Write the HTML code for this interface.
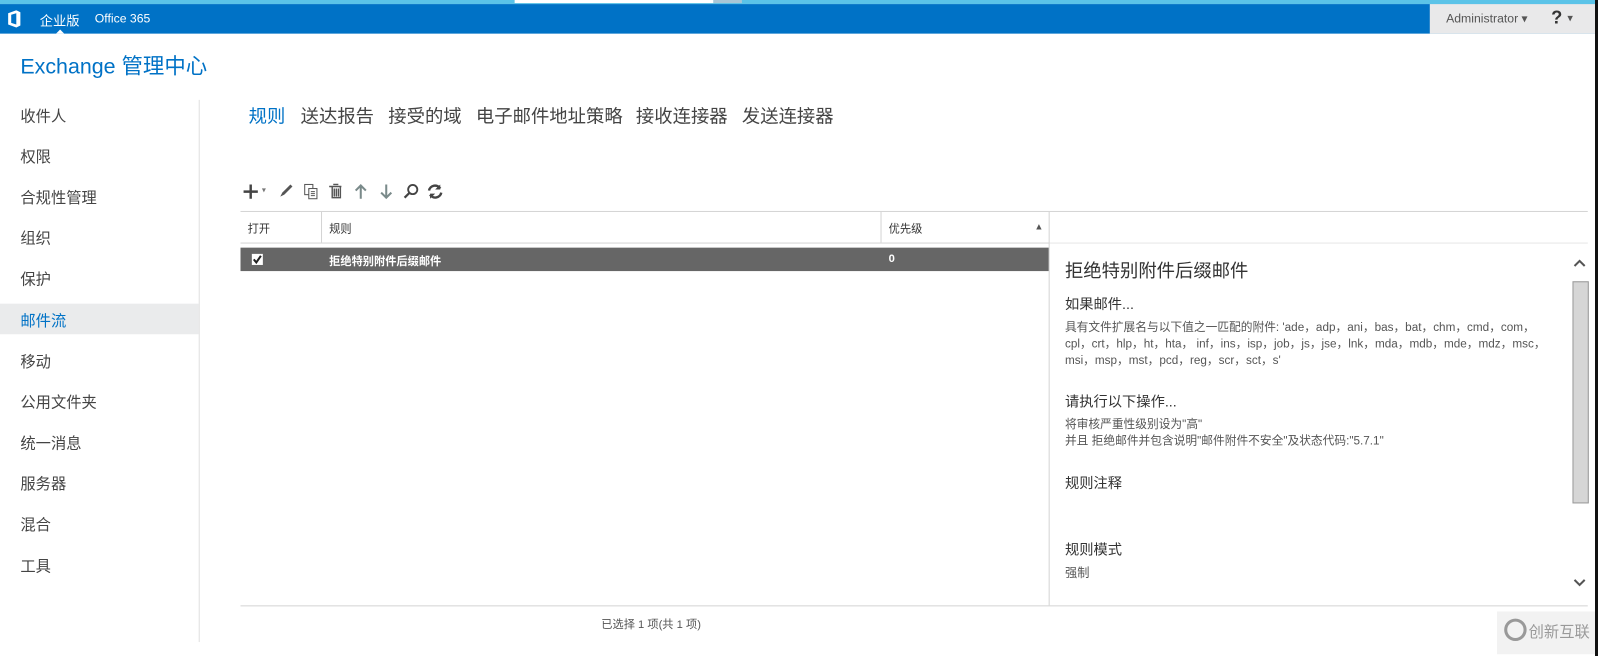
<!DOCTYPE html>
<html><head><meta charset="utf-8"><style>
*{margin:0;padding:0;box-sizing:border-box}
body{width:1598px;height:656px;background:#fff;font-family:"Liberation Sans","Noto Sans CJK SC",sans-serif;position:relative;overflow:hidden;color:#333}
#w{position:absolute;left:0;top:0;width:1568px;height:644px;transform:scale(1.0191);transform-origin:0 0}
.a{position:absolute;white-space:nowrap}
.nav{left:20px;font-size:15px;color:#444}
.tab{top:100px;font-size:18px;color:#444}
.hl{position:absolute;background:#d4d4d4}
.s{font-size:12px;color:#555;line-height:16px}
</style></head><body>
<div id="w">
<div class="a" style="left:0;top:0;width:1568px;height:4px;background:#5bc3e8"></div>
<div class="a" style="left:505px;top:0;width:195px;height:3px;background:#fff"></div>
<div class="a" style="left:700px;top:0;width:28px;height:3px;background:#a9c6d6"></div>
<div class="a" style="left:0;top:4px;width:1568px;height:29px;background:#0072c6"></div>
<div class="a" style="left:1403px;top:4px;width:165px;height:29px;background:#e9e9ea"></div>
<svg class="a" style="left:7px;top:10px" width="14" height="17" viewBox="0 0 14 17"><path d="M1 3 L9 0 L13 2 L13 15 L9 17 L1 14 Z M4 4.5 L4 12.5 L9 14 L9 3 Z" fill="#fff" fill-rule="evenodd"/></svg>
<div class="a" style="left:39px;top:10px;font-size:13px;color:#fff">企业版</div>
<div class="a" style="left:55px;top:29px;width:0;height:0;border-left:4px solid transparent;border-right:4px solid transparent;border-bottom:4px solid #fff"></div>
<div class="a" style="left:93px;top:11px;font-size:12px;color:#fff">Office 365</div>
<div class="a" style="left:1419px;top:11px;font-size:12px;color:#555">Administrator ▾</div>
<div class="a" style="left:1522px;top:7px;font-size:18px;font-weight:bold;color:#333">?</div>
<div class="a" style="left:1538px;top:11px;font-size:11px;color:#555">▾</div>
<div class="a" style="left:20px;top:49px;font-size:21px;color:#0072c6">Exchange 管理中心</div>
<div class="a" style="left:0;top:298px;width:195px;height:30px;background:#eaebec"></div>
<div class="a nav" style="top:103px">收件人</div>
<div class="a nav" style="top:143px">权限</div>
<div class="a nav" style="top:183px">合规性管理</div>
<div class="a nav" style="top:223px">组织</div>
<div class="a nav" style="top:263px">保护</div>
<div class="a nav" style="top:304px;color:#0072c6">邮件流</div>
<div class="a nav" style="top:344px">移动</div>
<div class="a nav" style="top:384px">公用文件夹</div>
<div class="a nav" style="top:424px">统一消息</div>
<div class="a nav" style="top:464px">服务器</div>
<div class="a nav" style="top:504px">混合</div>
<div class="a nav" style="top:545px">工具</div>
<div class="a" style="left:195px;top:98px;width:1px;height:532px;background:#e0e0e0"></div>
<div class="a tab" style="left:244px;color:#0072c6">规则</div>
<div class="a tab" style="left:295px">送达报告</div>
<div class="a tab" style="left:381px">接受的域</div>
<div class="a tab" style="left:467px">电子邮件地址策略</div>
<div class="a tab" style="left:624px">接收连接器</div>
<div class="a tab" style="left:728px">发送连接器</div>
<svg class="a" style="left:237px;top:179px" width="18" height="18"><path d="M9 2v14M2 9h14" stroke="#444" stroke-width="2.4"/></svg>
<div class="a" style="left:257px;top:182px;font-size:8px;color:#777">▾</div>
<svg class="a" style="left:272px;top:178px" width="18" height="18"><path d="M3 15 L5 11 L13 3 L15 5 L7 13 Z" fill="#555"/></svg>
<svg class="a" style="left:297px;top:179px" width="18" height="18"><rect x="2" y="2" width="8" height="10" fill="none" stroke="#555"/><rect x="6" y="6" width="8" height="10" fill="#fff" stroke="#555"/><path d="M8 9h4M8 11h4M8 13h4" stroke="#555"/></svg>
<svg class="a" style="left:321px;top:179px" width="18" height="18"><path d="M2 4h12M5 4v11h8V4M7 6v8M9 6v8M11 6v8M6 2h5" stroke="#555" fill="none" stroke-width="1.4"/></svg>
<svg class="a" style="left:346px;top:179px" width="16" height="18"><path d="M8 16V3M3 8l5-5 5 5" stroke="#7a8a8a" fill="none" stroke-width="2"/></svg>
<svg class="a" style="left:371px;top:179px" width="16" height="18"><path d="M8 2v13M3 10l5 5 5-5" stroke="#7a8a8a" fill="none" stroke-width="2"/></svg>
<svg class="a" style="left:395px;top:179px" width="18" height="18"><circle cx="10" cy="7" r="4.5" fill="none" stroke="#444" stroke-width="1.8"/><path d="M7 10L2 15" stroke="#444" stroke-width="2.2"/></svg>
<svg class="a" style="left:418px;top:179px" width="18" height="18"><path d="M3 8a6 6 0 0 1 11-2M15 10a6 6 0 0 1-11 2" fill="none" stroke="#444" stroke-width="2.4"/><path d="M14 2v5h-5zM4 16v-5h5z" fill="#444"/></svg>
<div class="hl" style="left:236px;top:207px;width:1322px;height:1px"></div>
<div class="hl" style="left:236px;top:238px;width:794px;height:1px"></div>
<div class="hl" style="left:1030px;top:238px;width:528px;height:1px;background:#e6e6e6"></div>
<div class="hl" style="left:315px;top:208px;width:1px;height:30px"></div>
<div class="hl" style="left:864px;top:208px;width:1px;height:30px"></div>
<div class="hl" style="left:1029px;top:208px;width:1px;height:386px"></div>
<div class="a" style="left:243px;top:216px;font-size:11px;color:#333">打开</div>
<div class="a" style="left:323px;top:216px;font-size:11px;color:#333">规则</div>
<div class="a" style="left:872px;top:216px;font-size:11px;color:#333">优先级</div>
<div class="a" style="left:1015px;top:217px;font-size:9px;color:#555">▲</div>
<div class="a" style="left:236px;top:243px;width:793px;height:23px;background:#666"></div>
<svg class="a" style="left:247px;top:249px" width="11" height="11"><rect width="11" height="11" fill="#fff"/><path d="M2 5.5l2.5 3L9 2" stroke="#222" stroke-width="2" fill="none"/></svg>
<div class="a" style="left:323px;top:248px;font-size:11px;color:#fff;font-weight:bold">拒绝特别附件后缀邮件</div>
<div class="a" style="left:872px;top:248px;font-size:11px;color:#fff;font-weight:bold">0</div>
<div class="a" style="left:1045px;top:252px;font-size:18px;color:#333">拒绝特别附件后缀邮件</div>
<div class="a" style="left:1045px;top:288px;font-size:14px;color:#333">如果邮件...</div>
<div class="a s" style="left:1045px;top:314px;font-size:11.5px">具有文件扩展名与以下值之一匹配的附件: 'ade，adp，ani，bas，bat，chm，cmd，com，<br>cpl，crt，hlp，ht，hta， inf，ins，isp，job，js，jse，lnk，mda，mdb，mde，mdz，msc，<br>msi，msp，mst，pcd，reg，scr，sct，s'</div>
<div class="a" style="left:1045px;top:384px;font-size:14px;color:#333">请执行以下操作...</div>
<div class="a s" style="left:1045px;top:409px;font-size:11.5px">将审核严重性级别设为"高"<br>并且 拒绝邮件并包含说明"邮件附件不安全"及状态代码:"5.7.1"</div>
<div class="a" style="left:1045px;top:464px;font-size:14px;color:#333">规则注释</div>
<div class="a" style="left:1045px;top:529px;font-size:14px;color:#333">规则模式</div>
<div class="a s" style="left:1045px;top:554px">强制</div>
<svg class="a" style="left:1543px;top:253px" width="14" height="10"><path d="M2 8l5-5 5 5" stroke="#555" stroke-width="2" fill="none"/></svg>
<div class="a" style="left:1543px;top:276px;width:16px;height:218px;background:#d6d6d6;border:1px solid #999"></div>
<svg class="a" style="left:1543px;top:567px" width="14" height="10"><path d="M2 2l5 5 5-5" stroke="#555" stroke-width="2" fill="none"/></svg>
<div class="hl" style="left:236px;top:594px;width:1322px;height:1px"></div>
<div class="a" style="left:590px;top:604px;font-size:11px;color:#555">已选择 1 项(共 1 项)</div>
<div class="a" style="left:1469px;top:600px;width:99px;height:42px;background:#f2f2f2"></div>
<div class="a" style="left:1476px;top:607px;width:22px;height:22px;border:3px solid #999;border-radius:50%"></div>
<div class="a" style="left:1500px;top:609px;font-size:15px;color:#999">创新互联</div>
</div>
<div class="a" style="left:1595px;top:0;width:3px;height:656px;background:#111"></div>
</body></html>
